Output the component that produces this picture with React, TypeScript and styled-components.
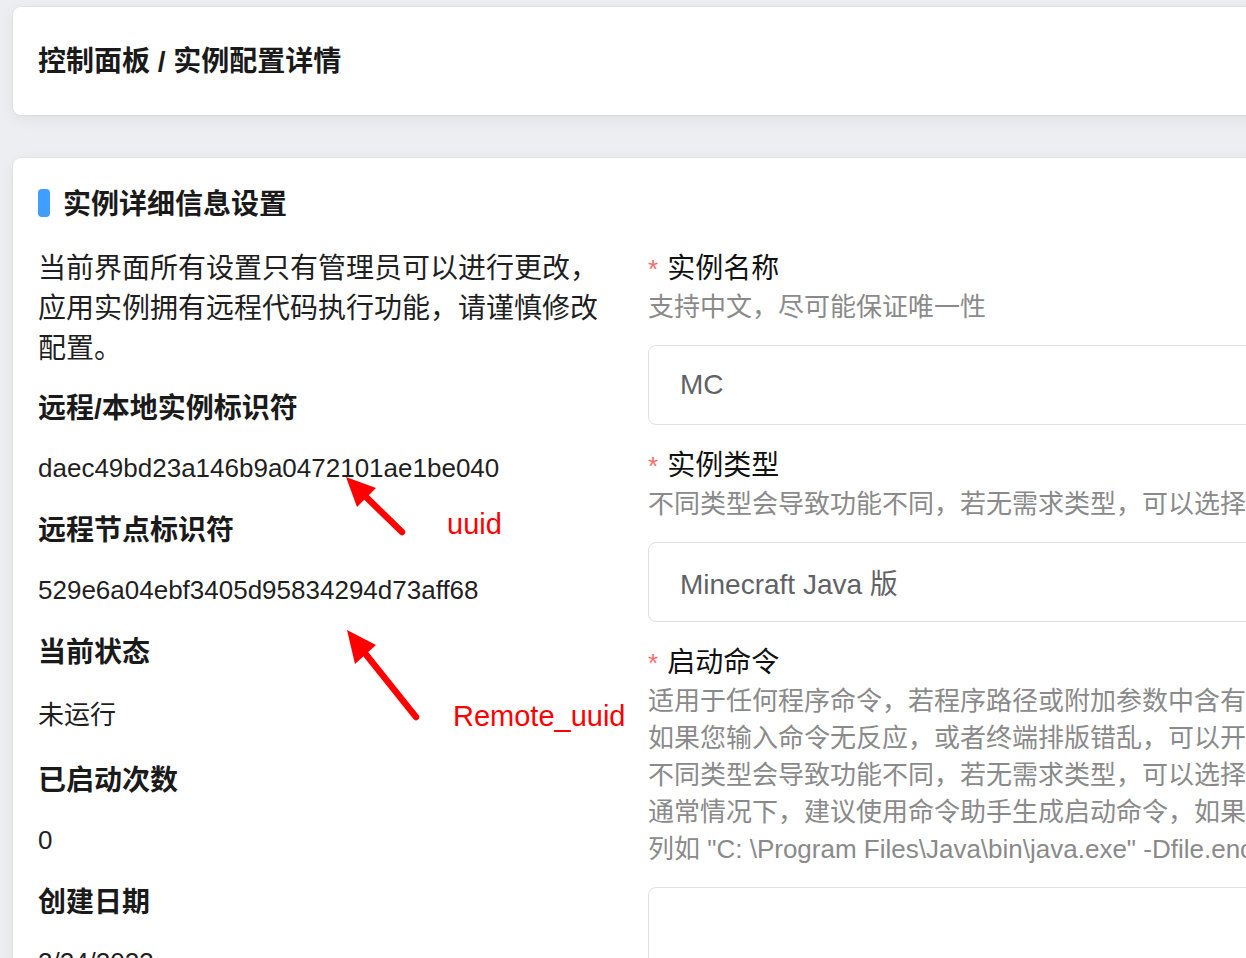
import React from "react";
import styled, { createGlobalStyle } from "styled-components";

const GlobalStyle = createGlobalStyle`
  html, body {
    margin: 0;
    padding: 0;
    overflow: hidden;
    background: #eceef2;
  }
  body {
    font-family: "Liberation Sans", "Noto Sans CJK SC", sans-serif;
    color: #222;
  }
  * { box-sizing: border-box; }
`;

const Page = styled.div`
  position: relative;
  width: 2000px;
  height: 958px;
  padding: 7px 0 0 13px;
  overflow: hidden;
`;

const Card = styled.section`
  width: 1900px;
  background: #fff;
  border-radius: 8px;
  box-shadow: 0 0 0 1px rgba(0, 0, 0, 0.035), 0 4px 16px rgba(0, 0, 0, 0.06);
`;

const HeaderCard = styled(Card)`
  height: 108px;
  display: flex;
  align-items: center;
  padding: 0 25px;
`;

const PageTitle = styled.h1`
  margin: 0;
  padding-top: 2px;
  font-size: 28px;
  line-height: 38px;
  font-weight: 700;
  color: #1a1a1a;
`;

const DetailCard = styled(Card)`
  margin-top: 43px;
  padding: 31px 25px 40px;
`;

const SectionHeader = styled.div`
  display: flex;
  align-items: flex-start;
  gap: 13px;
  height: 28px;
`;

const Bar = styled.span`
  width: 12px;
  height: 28px;
  border-radius: 4px;
  background: #409eff;
`;

const SectionTitle = styled.h2`
  margin: 0;
  padding-top: 4px;
  font-size: 28px;
  line-height: 24px;
  font-weight: 700;
  color: #1a1a1a;
`;

const Columns = styled.div`
  display: grid;
  grid-template-columns: 585px 1fr;
  column-gap: 25px;
  margin-top: 30px;
`;

const LeftCol = styled.div`
  display: flex;
  flex-direction: column;
`;

const Notice = styled.p`
  margin: 0 0 18px;
  padding-top: 2px;
  font-size: 28px;
  line-height: 40px;
  color: #1f1f1f;
`;

const InfoLabel = styled.div`
  padding-top: 4px;
  font-size: 28px;
  line-height: 36px;
  font-weight: 700;
  color: #1a1a1a;
`;

const InfoValue = styled.div<{ $lh: number }>`
  margin: 26px 0;
  font-size: 26px;
  line-height: ${(p) => p.$lh}px;
  color: #1f1f1f;
`;

const RightCol = styled.div`
  display: flex;
  flex-direction: column;
`;

const FormItem = styled.div`
  & + & { margin-top: 19px; }
`;

const FieldLabel = styled.div`
  padding-top: 4px;
  font-size: 28px;
  line-height: 36px;
  color: #111;
`;

const Required = styled.span`
  color: #f56c6c;
  font-size: 26px;
  margin-right: 9px;
`;

const HelpBlock = styled.div`
  margin-top: 2px;
`;

const HelpLine = styled.div`
  font-size: 26px;
  line-height: 37px;
  color: #8a8a8a;
  white-space: nowrap;
`;

const InputBox = styled.div<{ $tall?: boolean }>`
  margin-top: 19px;
  height: ${(p) => (p.$tall ? 240 : 80)}px;
  border: 1px solid #dcdfe6;
  border-radius: 8px;
  padding: 0 31px;
  display: flex;
  align-items: ${(p) => (p.$tall ? "flex-start" : "center")};
  font-size: 28px;
  color: #606266;
  background: #fff;
`;

const Overlay = styled.svg`
  position: absolute;
  left: 0;
  top: 0;
  width: 1246px;
  height: 958px;
  pointer-events: none;
`;

const Note = styled.span<{ $x: number; $y: number }>`
  position: absolute;
  left: ${(p) => p.$x}px;
  top: ${(p) => p.$y}px;
  font-size: 29px;
  line-height: 28px;
  color: #ff0000;
  white-space: nowrap;
`;

const info = [
  { label: "远程/本地实例标识符", value: "daec49bd23a146b9a0472101ae1be040", lh: 30 },
  { label: "远程节点标识符", value: "529e6a04ebf3405d95834294d73aff68", lh: 30 },
  { label: "当前状态", value: "未运行", lh: 36 },
  { label: "已启动次数", value: "0", lh: 30 },
  { label: "创建日期", value: "2/24/2023", lh: 30 },
];

const fields = [
  {
    label: "实例名称",
    help: ["支持中文，尽可能保证唯一性"],
    value: "MC",
  },
  {
    label: "实例类型",
    help: ["不同类型会导致功能不同，若无需求类型，可以选择通用控制台程序。"],
    value: "Minecraft Java 版",
  },
  {
    label: "启动命令",
    help: [
      "适用于任何程序命令，若程序路径或附加参数中含有空格，请使用双引号包裹。",
      "如果您输入命令无反应，或者终端排版错乱，可以开启仿真终端。",
      "不同类型会导致功能不同，若无需求类型，可以选择通用控制台程序。",
      "通常情况下，建议使用命令助手生成启动命令，如果需要手动编写请注意格式。",
      "列如 \"C: \\Program Files\\Java\\bin\\java.exe\" -Dfile.encoding=UTF-8 -jar server.jar",
    ],
    value: "",
    tall: true,
  },
];

export default function App() {
  return (
    <>
      <GlobalStyle />
      <Page>
        <HeaderCard>
          <PageTitle>控制面板 / 实例配置详情</PageTitle>
        </HeaderCard>
        <DetailCard>
          <SectionHeader>
            <Bar />
            <SectionTitle>实例详细信息设置</SectionTitle>
          </SectionHeader>
          <Columns>
            <LeftCol>
              <Notice>
                当前界面所有设置只有管理员可以进行更改，应用实例拥有远程代码执行功能，请谨慎修改配置。
              </Notice>
              {info.map((it) => (
                <React.Fragment key={it.label}>
                  <InfoLabel>{it.label}</InfoLabel>
                  <InfoValue $lh={it.lh}>{it.value}</InfoValue>
                </React.Fragment>
              ))}
            </LeftCol>
            <RightCol>
              {fields.map((f) => (
                <FormItem key={f.label}>
                  <FieldLabel>
                    <Required>*</Required>
                    {f.label}
                  </FieldLabel>
                  <HelpBlock>
                    {f.help.map((h, i) => (
                      <HelpLine key={i}>{h}</HelpLine>
                    ))}
                  </HelpBlock>
                  <InputBox $tall={f.tall}>{f.value}</InputBox>
                </FormItem>
              ))}
            </RightCol>
          </Columns>
        </DetailCard>

        <Overlay viewBox="0 0 1246 958">
          <line x1="402" y1="532" x2="364" y2="495" stroke="#ff0000" strokeWidth="6.5" strokeLinecap="round" />
          <polygon points="346,477 376,488 357,507" fill="#ff0000" />
          <line x1="416" y1="717" x2="364" y2="652" stroke="#ff0000" strokeWidth="6.5" strokeLinecap="round" />
          <polygon points="347,630 376,645 355,664" fill="#ff0000" />
        </Overlay>
        <Note $x={447} $y={510}>uuid</Note>
        <Note $x={453} $y={702}>Remote_uuid</Note>
      </Page>
    </>
  );
}
